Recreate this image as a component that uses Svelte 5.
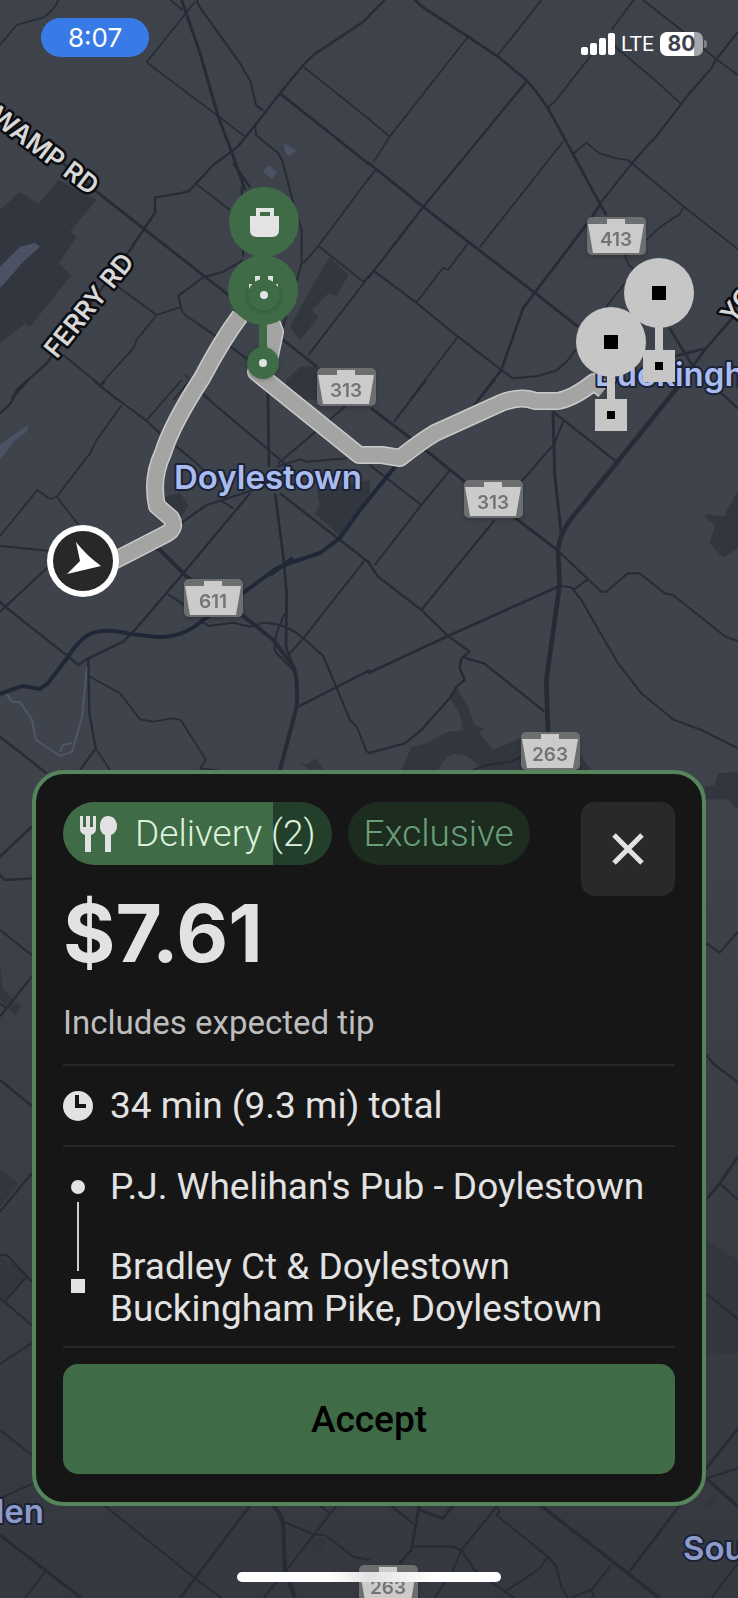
<script lang="ts">
	type Road = [number, string];
	type Tile = { x: number; y: number; parks?: string; water?: string; roads: Road[] };

	// Map tiles, three units to the pixel, each road is [width, path]
	const tiles: Tile[] = [
		{
			x: 0,
			y: 0,
			parks:
				'M0 630L60 575L115 612L175 540L290 600L210 695L230 712L175 790L215 825L90 980L75 970L0 1030zM990 770L1045 825L1010 888L985 880L935 930L955 950L900 1022L870 980L935 860zM860 1140L900 1100L960 1100V1200H840z',
			water:
				'M0 800L60 740L105 728L120 740L70 785L0 865zM852 430L888 450L870 470L855 458zM788 515L808 495L832 518L815 537z',
			roads: [
				[9, 'M545 0L600 160L655 350L700 470L735 570'],
				[6, 'M590 0L598 20L720 190L752 245L768 315L790 332'],
				[5, 'M510 0L548 30M585 5L440 187L650 345L735 410'],
				[7, 'M1110 45L1090 65L940 165L905 200L840 280L770 370L715 438L690 458L640 495L565 575L465 593V638L430 690L390 750L140 1090L50 1170L35 1200'],
				[5, 'M175 0Q160 35 130 52L50 75L0 135M910 200L1110 360'],
				[8, 'M840 280L1110 495M700 490L750 562'],
				[6, 'M765 370L768 405L835 460L848 485L880 610L905 690V790L848 985M725 560L730 770'],
				[8, 'M190 490L290 575L430 685L685 885L850 1020L950 1100'],
				[5, 'M590 553L690 630M1110 530L955 738L910 790M955 738L1090 845L1110 825'],
				[6, 'M1110 825L925 1065M730 780L670 815L610 832L535 887L545 930L555 945L650 1010L760 1090'],
				[5, 'M545 920L470 945L340 850M470 945L410 1020L400 1045L300 1155M190 1065L300 1155L350 1200M650 1045L520 1200M555 1125L630 1200M803 1160V1200']
			]
		},
		{
			x: 368,
			y: 0,
			roads: [
				[8, 'M140 0L165 22L300 110L390 170L475 240L505 275L540 325L615 462L695 610L715 645'],
				[7, 'M50 0L0 50M475 245L165 622L0 835'],
				[5, 'M520 0L390 165M300 110L65 410L0 355M65 410L15 488M22 510L0 540M585 425L335 742'],
				[8, 'M0 488L165 620L300 725L500 878L630 980'],
				[5, 'M300 730L240 810L225 803L145 908M270 1010L125 1200'],
				[6, 'M20 815L145 908L270 1010L400 1110L435 1135L510 1128L565 1112L600 1080L630 1040'],
				[5, 'M797 0L730 90M670 165L560 305L540 322M825 0L940 90L1045 178L1110 225M735 135L855 235L940 312'],
				[6, 'M1110 95L1045 178L1030 205L960 285L940 312L860 415L835 440L790 492L695 612'],
				[5, 'M615 462L655 428L695 460L745 475L780 480L945 618L1110 748M948 620L935 642L875 682L835 720'],
				[8, 'M695 615L660 668L500 878L465 925L400 1110L330 1200'],
				[5, 'M770 765L782 795L800 810M770 850L715 920'],
				[8, 'M905 985L975 1100M1110 935L1010 1050L930 1160M915 1070L1015 1045']
			]
		},
		{
			x: 0,
			y: 380,
			parks:
				'M490 350L540 340L565 375L535 430L500 400zM950 330L1110 300V350L1020 470L945 400L960 375zM895 1145L920 1155L945 1135L970 1168H925z',
			water: 'M0 195L40 165L85 135L80 155L40 185L0 240z',
			roads: [
				[7, 'M85 0L45 45L32 70L0 100'],
				[6, 'M280 0L300 18L440 123L480 160L585 245L630 290M315 5L300 18'],
				[5, 'M365 75L290 180L270 220L170 350L150 357L112 330L0 468M170 350L240 440M545 0L440 120'],
				[6, 'M610 45L800 205L870 265M1035 80L835 250M830 260L900 238L920 245L1040 235M660 360L700 385'],
				[8, 'M803 0L807 260M825 340L850 530L860 640L858 800L880 860'],
				[7, 'M840 340L1020 480L1110 550M760 330L620 375L535 435'],
				[7, 'M750 340L550 580L400 755L370 785L265 835L235 855L205 830L15 680L0 665'],
				[6, 'M0 498L145 512M145 560L0 695M500 640L560 680M455 505L490 515'],
				[12, 'M470 500L560 590L720 700L820 780L880 860Q895 900 890 980L840 1170'],
				[6, 'M600 720L625 738L700 728L750 740L790 728Q860 730 910 775L970 828L1050 1020L1070 1040L1100 1115L1110 1118'],
				[6, 'M1095 540L910 775L865 825M855 700Q810 790 830 820L880 870'],
				[7, 'M895 980L1110 870M265 835L268 1000L287 1105L240 1170M0 1070L140 1180'],
				[5, 'M287 1105L330 1170M270 890L360 940L420 1018L460 1025L515 1015L542 1020L618 1140L600 1165L655 1170']
			]
		},
		{
			x: 368,
			y: 380,
			parks:
				'M1110 330L1075 395L1070 410L1015 402L1010 412L1042 435L1025 490L1065 533L1110 505zM265 920L300 980L320 1035L345 1045L335 1060L375 1110L460 1075L640 1130L670 1170H340Q290 1100 235 1130L210 1170H100L130 1100L170 1092L240 1055L285 1050L275 1000L248 960z',
			roads: [
				[6, 'M175 0L78 125M380 0L310 85M245 272L160 375L20 555M5 255L160 375M585 125L560 190L460 305'],
				[9, 'M10 85L135 180L290 305L450 420L570 512M555 95L560 280L580 465'],
				[6, 'M570 512L660 598L700 635H715L780 580H815L890 640L915 645L1075 772L1110 782M660 598L618 628'],
				[7, 'M555 95L745 245M1055 35L1110 85M285 832L348 850L530 995'],
				[14, 'M930 20L745 250L610 415Q575 460 570 510L575 615L535 900L540 1055'],
				[6, 'M380 420L160 690M315 1170L360 1155L430 1145L460 1130'],
				[7, 'M0 545L30 590L160 690L240 768L305 815L280 835L275 865L290 900L265 920L245 955L160 1050L110 1090L0 1120'],
				[8, 'M0 880L240 768L575 618'],
				[6, 'M575 618L610 622L640 660L750 850L820 940L915 1018L1000 1050L1110 1105']
			]
		},
		{
			x: 0,
			y: 760,
			parks: 'M0 620L10 690L65 740L45 765L0 720z',
			roads: [
				[7, 'M95 200L0 290M0 345L15 360L95 355'],
				[6, 'M0 510L95 585M95 650L0 770M0 730L20 745']
			]
		},
		{
			x: 368,
			y: 760,
			parks: 'M1010 80L1040 75L1050 40L1110 35V150L1080 118H1010z',
			roads: [[6, 'M1015 550L1055 578L1110 515']]
		},
		{
			x: 0,
			y: 1050,
			parks: 'M0 360L55 400L0 470zM0 620L60 655L80 685L20 750L0 740z',
			roads: [
				[7, 'M0 90L95 168M95 370L0 485M0 615H20L95 695'],
				[6, 'M80 680L15 755M0 745L95 825M95 880L0 942']
			]
		},
		{
			x: 368,
			y: 1050,
			parks: 'M1015 570L1110 630V908L1015 918z',
			roads: [
				[7, 'M1015 15L1035 40L1110 98M1055 400L1110 450M1015 730L1110 808'],
				[9, 'M1110 320L1055 400L1018 445']
			]
		},
		{
			x: 0,
			y: 1340,
			parks: 'M930 600L980 598L955 650z',
			roads: [
				[6, 'M0 270L95 345M100 430L0 475M135 695L75 774M305 490L585 715L665 774'],
				[9, 'M0 585L135 690L245 774'],
				[8, 'M755 490L585 715L540 774'],
				[13, 'M815 490Q850 530 850 560L855 690L885 774'],
				[6, 'M1015 490L860 690L790 774M850 545L940 583L975 585L1060 650L1110 660M950 490L990 520']
			]
		},
		{
			x: 368,
			y: 1340,
			parks: 'M1005 500L1040 465L1055 475L1015 510z',
			roads: [
				[9, 'M155 490L130 630L95 670M155 510L225 535L260 490'],
				[7, 'M60 490L135 550M130 620H255L280 630L320 690L410 755L440 774'],
				[6, 'M280 630L255 690L200 774M390 495L280 630M385 500L395 515L385 525L540 650L565 680L580 740L600 774M540 650L510 690L410 755'],
				[10, 'M510 490L780 700L875 774M1015 415L1110 500'],
				[8, 'M940 490L780 700M1110 265L1015 385'],
				[6, 'M1110 385L1015 415M730 675L670 750L605 774M670 750L680 774M1110 670L1030 774']
			]
		}
	];

	const route =
		'M100 568L166 534Q177 528 171 518L157 506Q151 478 163 453Q172 424 202 378Q222 340 240 316';
	const routeEast =
		'M262 322L272 324L275 332L270 356L256 372L359 455H382L400 458Q420 442 435 433L501 403Q521 395 535 401H558Q574 398 594 382L604 390';

	const shields = [
		{ x: 587, y: 217, name: '413' },
		{ x: 317, y: 368, name: '313' },
		{ x: 464, y: 480, name: '313' },
		{ x: 184, y: 579, name: '611' },
		{ x: 521, y: 732, name: '263' },
		{ x: 359, y: 1565, name: '263' }
	];

	const dropoffs = [
		{ x: 659, y: 293 },
		{ x: 611, y: 342 }
	];

	const pickups = [
		{ x: 263, y: 290 },
		{ x: 264, y: 222 }
	];

	let progress = 78;
	let offer = {
		type: 'Delivery (2)',
		tag: 'Exclusive',
		price: '$7.61',
		note: 'Includes expected tip',
		trip: '34 min (9.3 mi) total',
		pickup: "P.J. Whelihan's Pub - Doylestown",
		dropoff: 'Bradley Ct & Doylestown Buckingham Pike, Doylestown'
	};
</script>

<div class="screen">
	<svg class="map" viewBox="0 0 738 1598" preserveAspectRatio="xMidYMin slice" role="img" aria-label="Route map">
		<defs>
			<linearGradient id="land" x1="0" y1="0" x2="0" y2="1">
				<stop offset="0" stop-color="#3e424b" />
				<stop offset="0.45" stop-color="#3f434c" />
				<stop offset="0.65" stop-color="#3d3f47" />
				<stop offset="1" stop-color="#36383f" />
			</linearGradient>
		</defs>
		<rect width="738" height="1598" fill="url(#land)" />
		{#each tiles as tile}
			<g transform="translate({tile.x} {tile.y}) scale(0.33333)">
				{#if tile.parks}<path d={tile.parks} class="park" />{/if}
				{#if tile.water}<path d={tile.water} class="water" />{/if}
			</g>
		{/each}
		<path class="stream" d="M5 693L13 702H20L32 720L36 740L60 756L72 752L82 717L87 667M60 752L63 745L72 743" />
		{#each tiles as tile}
			<g transform="translate({tile.x} {tile.y}) scale(0.33333)">
				{#each tile.roads as [width, d]}
					<path {d} class="road" stroke-width={width} />
				{/each}
			</g>
		{/each}
		<path
			class="highway"
			d="M398 463L360 510L340 538L320 553L293 562L277 568L247 590L203 620Q183 638 157 637L130 634Q103 627 88 635Q77 642 68 657L48 683L40 689L22 686L0 694M293 558L270 575"
		/>

		<g class="route">
			<path d={route} class="route-edge" />
			<path d={routeEast} class="route-edge" />
			<path d={route} class="route-fill" />
			<path d={routeEast} class="route-fill" />
		</g>

		{#each shields as shield}
			<g class="shield" transform="translate({shield.x} {shield.y})">
				<rect width="59" height="38" rx="5" fill="#6d6e70" />
				<path d="M20 2H38V7H57L52 36H6L1 7H20z" fill="#cbcbcb" />
				<text x="29" y="29" class="shield-text">{shield.name}</text>
			</g>
		{/each}

		<text class="street" text-anchor="end" transform="translate(90 196) rotate(37)">SWAMP RD</text>
		<text class="street" text-anchor="middle" transform="translate(96 311) rotate(-51)">FERRY RD</text>
		<text class="street" transform="translate(733 325) rotate(-51)">YORK RD</text>
		<text class="town" x="174" y="489">Doylestown</text>
		<text class="town" x="595" y="386">Buckingham</text>
		<text class="town dim" x="44" y="1523" text-anchor="end">len</text>
		<text class="town dim" x="683" y="1560">Sou</text>

		{#each dropoffs as pin}
			<g transform="translate({pin.x} {pin.y})" fill="#c6c6c6">
				<circle r="35" />
				<rect x="-4" y="30" width="8" height="40" />
				<rect x="-16" y="57" width="32" height="32" />
				<path d="M-7 -7H7V7H-7zM-4 69H4V77H-4z" fill="#000" />
			</g>
		{/each}

		{#each pickups as pin}
			<g transform="translate({pin.x} {pin.y})" fill="#406b47">
				<circle r="35" />
				<path
					fill="#e4e4e4"
					fill-rule="evenodd"
					d="M-14 -6H-8V-14H10V-6H15V8Q15 15 8 15H-7Q-14 15 -14 8zM-4 -10V-6H6V-10z"
				/>
				<rect x="-4" y="30" width="8" height="40" />
				<circle cy="73" r="16" class="foot" />
				<circle cy="73" r="4" fill="#e4e4e4" />
			</g>
		{/each}

		<circle cx="83" cy="561" r="36" fill="#fff" />
		<circle cx="83" cy="561" r="30" fill="#282828" />
		<path d="M76 542Q86 555 101 566L67 574L80 561z" fill="#fff" />
	</svg>

	<header class="status">
		<span class="clock">8:07</span>
		<div class="signals">
			<svg width="34" height="22" viewBox="0 0 34 22" fill="#fff" aria-hidden="true">
				<rect x="0" y="14" width="7" height="8" rx="2" />
				<rect x="9" y="10" width="7" height="12" rx="2" />
				<rect x="18" y="5" width="7" height="17" rx="2" />
				<rect x="27" y="0" width="7" height="22" rx="2" />
			</svg>
			<span class="network">LTE</span>
			<span class="battery">80</span>
		</div>
	</header>

	<main class="card">
		<div class="top">
			<span class="pill delivery" style="--progress: {progress}%">
				<svg width="38" height="38" viewBox="0 0 38 38" fill="#e2e2e2" aria-hidden="true">
					<path d="M1 1H4V12H7V1H11V12H14V1H17V14Q17 18 12 20V37H6V20Q1 18 1 14z" />
					<path d="M29 1C34 1 38 5 38 11C38 16 35 19 32 20V37H26V20C23 19 21 16 21 11C21 5 24 1 29 1z" />
				</svg>
				{offer.type}
			</span>
			<span class="pill exclusive">{offer.tag}</span>
			<button class="close" aria-label="Decline">
				<svg width="32" height="32" viewBox="0 0 32 32" aria-hidden="true">
					<path d="M2 2L30 30M30 2L2 30" stroke="#e2e2e2" stroke-width="5" />
				</svg>
			</button>
		</div>
		<h1 class="price">{offer.price}</h1>
		<p class="note">{offer.note}</p>
		<div class="row">
			<svg width="30" height="30" viewBox="0 0 30 30" aria-hidden="true">
				<circle cx="15" cy="15" r="15" fill="#e2e2e2" />
				<path d="M14 4V15H23" fill="none" stroke="#161616" stroke-width="4" />
			</svg>
			<span>{offer.trip}</span>
		</div>
		<div class="stops">
			<div class="line" aria-hidden="true">
				<span class="dot"></span>
				<span class="bar"></span>
				<span class="square"></span>
			</div>
			<div class="places">
				<p>{offer.pickup}</p>
				<p>{offer.dropoff}</p>
			</div>
		</div>
		<button class="accept">Accept</button>
	</main>
	<div class="home"></div>
</div>

<style>
	:global(body) {
		margin: 0;
		background: #36383f;
	}
	.screen {
		position: relative;
		min-height: 100vh;
		box-sizing: border-box;
		padding: 18px 32px 16px;
		display: flex;
		flex-direction: column;
		overflow: hidden;
		font-family: Roboto, 'Liberation Sans', sans-serif;
		color: #e2e2e2;
	}
	.map {
		position: absolute;
		inset: 0;
		width: 100%;
		height: 100%;
	}
	.park {
		fill: #32363f;
	}
	.water {
		fill: #4c5263;
	}
	.stream {
		fill: none;
		stroke: #50566a;
		stroke-width: 2;
	}
	.road {
		fill: none;
		stroke: #272b35;
		stroke-linejoin: round;
	}
	.highway {
		fill: none;
		stroke: #222738;
		stroke-width: 4;
	}
	.route path {
		fill: none;
		stroke-linejoin: round;
	}
	.route .route-edge {
		stroke: #cacaca;
		stroke-width: 18;
	}
	.route .route-fill {
		stroke: #a4a4a2;
		stroke-width: 15;
	}
	.shield {
		filter: drop-shadow(0 2px 2px rgba(0, 0, 0, 0.2));
	}
	.shield-text {
		font: 600 19px Inter, sans-serif;
		text-anchor: middle;
		fill: #747474;
	}
	.street,
	.town {
		paint-order: stroke;
		stroke-linejoin: round;
		font-family: Inter, 'Liberation Sans', sans-serif;
	}
	.street {
		font-size: 26px;
		font-weight: 600;
		fill: #d8d8d8;
		stroke: #0c0d10;
		stroke-width: 5px;
	}
	.town {
		font-size: 33px;
		font-weight: 600;
		fill: #a9bcf0;
		stroke: #1c2236;
		stroke-width: 4px;
	}
	.town.dim {
		fill: #8d9bcb;
	}
	.foot {
		filter: drop-shadow(0 1px 2px rgba(0, 0, 0, 0.25));
	}

	.status {
		position: relative;
		display: flex;
		justify-content: space-between;
		align-items: flex-start;
		padding: 0 3px 0 9px;
		color: #fff;
	}
	.clock {
		width: 108px;
		height: 39px;
		border-radius: 20px;
		background: #397be6;
		font: 400 26px/39px Inter, sans-serif;
		text-align: center;
	}
	.signals {
		display: flex;
		align-items: center;
		gap: 6px;
		height: 52px;
	}
	.network {
		font-size: 21px;
	}
	.battery {
		position: relative;
		width: 43px;
		height: 24px;
		border-radius: 7px;
		background: linear-gradient(90deg, #fff 80%, #a5a6a9 80%);
		color: #3e424b;
		font: 700 21px/24px Inter, sans-serif;
		text-align: center;
	}
	.battery::after {
		content: '';
		position: absolute;
		left: 44px;
		top: 8px;
		width: 3px;
		height: 8px;
		border-radius: 0 3px 3px 0;
		background: #7d8087;
	}

	.card {
		position: relative;
		margin-top: auto;
		padding: 28px 27px;
		border: 4px solid #54855b;
		border-radius: 32px;
		background: #161616;
	}
	.top {
		display: flex;
		align-items: flex-start;
		gap: 16px;
		height: 76px;
	}
	.pill {
		display: flex;
		align-items: center;
		gap: 18px;
		height: 63px;
		padding: 0 16px;
		border-radius: 32px;
		font-size: 37px;
		font-weight: 300;
		white-space: nowrap;
	}
	.delivery {
		background: linear-gradient(90deg, #406b47 var(--progress), #233f2b var(--progress));
		color: #dcf0dd;
	}
	.exclusive {
		background: #1c2d20;
		color: #6b9f78;
	}
	.close {
		flex: none;
		display: flex;
		align-items: center;
		justify-content: center;
		width: 94px;
		height: 94px;
		margin-left: auto;
		padding: 0;
		border: 0;
		border-radius: 14px;
		background: #292929;
	}
	.price {
		margin: 0;
		font: 700 80px/110px Inter, sans-serif;
	}
	.note {
		margin: 0;
		padding: 14px 0 20px;
		color: #bdbdbd;
		font-size: 33px;
		line-height: 42px;
	}
	.row,
	.stops {
		display: flex;
		border-top: 2px solid #272727;
		font-size: 37px;
		line-height: 42px;
	}
	.row {
		align-items: center;
		gap: 17px;
		padding: 19px 0 18px;
	}
	.stops {
		gap: 17px;
		padding: 19px 0 16px;
		border-bottom: 2px solid #272727;
	}
	.line {
		display: flex;
		flex-direction: column;
		align-items: center;
		gap: 8px;
		width: 30px;
		padding: 14px 0 0;
	}
	.dot,
	.square {
		width: 14px;
		height: 14px;
		background: #e2e2e2;
	}
	.dot {
		border-radius: 50%;
	}
	.bar {
		width: 2px;
		height: 69px;
		background: #cfcfcf;
	}
	.places {
		flex: 1;
		display: flex;
		flex-direction: column;
		gap: 38px;
	}
	.places p {
		margin: 0;
	}
	.accept {
		display: block;
		width: 100%;
		height: 110px;
		margin-top: 16px;
		padding: 0;
		border: 0;
		border-radius: 15px;
		background: #406b47;
		color: #000;
		font: 500 37px Roboto, sans-serif;
	}
	.home {
		position: relative;
		width: 264px;
		height: 10px;
		margin: 66px auto 0;
		border-radius: 5px;
		background: linear-gradient(90deg, #fff 35%, #e2e2e2 50%, #fff 75%);
	}
</style>
